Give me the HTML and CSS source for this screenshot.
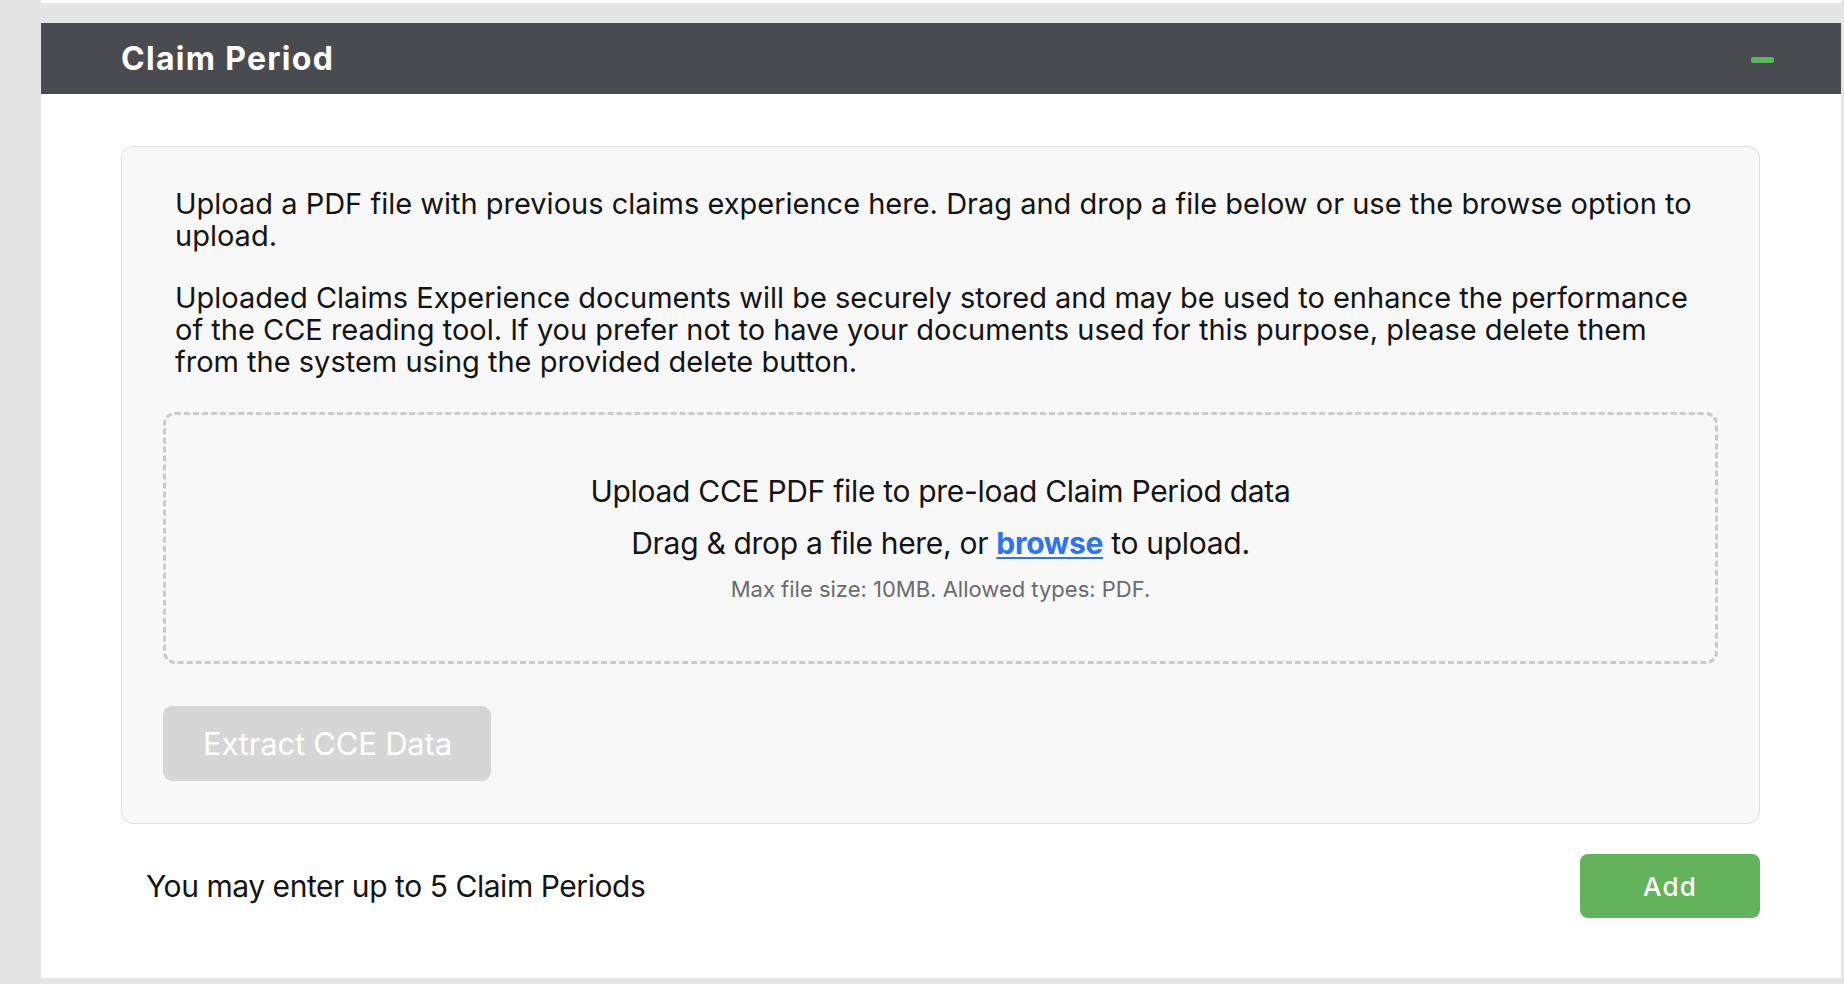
FILE: index.html
```html
<!DOCTYPE html>
<html lang="en">
<head>
<meta charset="utf-8">
<title>Claim Period</title>
<link rel="stylesheet" href="styles.css">
</head>
<body>
<div class="page">
  <div class="prev-panel"></div>
  <section class="panel">
    <header class="panel-header">
      <h2 class="panel-title">Claim Period</h2>
      <span class="collapse-icon" aria-label="Collapse"></span>
    </header>
    <div class="panel-body">
      <div class="upload-card">
        <p class="intro">Upload a PDF file with previous claims experience here. Drag and drop a file below or use the browse option to upload.</p>
        <p class="intro second">Uploaded Claims Experience documents will be securely stored and may be used to enhance the performance of the CCE reading tool. If you prefer not to have your documents used for this purpose, please delete them from the system using the provided delete button.</p>
        <div class="dropzone">
          <div class="drop-title">Upload CCE PDF file to pre-load Claim Period data</div>
          <div class="drop-line">Drag &amp; drop a file here, or <a class="browse" href="#">browse</a> to upload.</div>
          <div class="drop-hint">Max file size: 10MB. Allowed types: PDF.</div>
        </div>
        <button class="extract-btn" disabled>Extract CCE Data</button>
      </div>
      <div class="footer-row">
        <span class="limit-text">You may enter up to 5 Claim Periods</span>
        <button class="add-btn">Add</button>
      </div>
    </div>
  </section>
</div>
</body>
</html>
```

FILE: styles.css
```css
* { box-sizing: border-box; }

html, body {
  margin: 0;
  padding: 0;
}

body {
  background: #e5e5e5;
  font-family: Inter, "Noto Sans", "Liberation Sans", sans-serif;
  color: #141414;
}

.page {
  padding: 0 3px 4px 41px;
}

.prev-panel {
  height: 3px;
  background: #ffffff;
  margin-bottom: 20px;
}

.panel {
  background: #ffffff;
}

.panel-header {
  height: 71px;
  background: #4a4b50;
  display: flex;
  align-items: center;
  justify-content: space-between;
  padding: 0 67px 0 80px;
}

.panel-title {
  margin: 0;
  color: #ffffff;
  font-weight: 700;
  font-size: 32px;
  letter-spacing: 1.3px;
  line-height: 36px;
}

.collapse-icon {
  display: block;
  width: 23px;
  height: 6px;
  border-radius: 2px;
  background: #5db65a;
  margin-top: 3px;
}

.panel-body {
  padding: 52px 81px 60px 80px;
}

.upload-card {
  background: #f8f8f8;
  border: 1px solid #dedede;
  border-radius: 12px;
  padding: 41px 41px 42px 41px;
}

.intro {
  margin: 0;
  padding: 0 12px;
  font-size: 29px;
  line-height: 32px;
  letter-spacing: 0;
  color: #141414;
}

.intro.second {
  margin-top: 30px;
}

.dropzone {
  margin-top: 34px;
  border: 3px dashed #cbcbcb;
  border-radius: 12px;
  padding: 60px 20px 60px;
  text-align: center;
  display: flex;
  flex-direction: column;
  align-items: center;
}

.drop-title {
  font-size: 30px;
  line-height: 32px;
  letter-spacing: -0.3px;
}

.drop-line {
  margin-top: 20px;
  font-size: 30px;
  line-height: 32px;
  letter-spacing: -0.3px;
}

.browse {
  color: #2f73ec;
  font-weight: 700;
  text-decoration: underline;
  text-underline-offset: 3px;
  text-decoration-thickness: 2px;
}

.drop-hint {
  margin-top: 18px;
  font-size: 22px;
  line-height: 24px;
  color: #6b6b6b;
}

.extract-btn {
  margin-top: 42px;
  display: block;
  width: 328px;
  height: 75px;
  padding: 0 0 0 40px;
  text-align: left;
  border: none;
  border-radius: 9px;
  background: #d6d6d6;
  color: #ffffff;
  font-family: Inter, "Noto Sans", "Liberation Sans", sans-serif;
  font-size: 31px;
  letter-spacing: -0.2px;
}

.footer-row {
  margin-top: 30px;
  display: flex;
  align-items: center;
  justify-content: space-between;
  padding-left: 25px;
}

.limit-text {
  font-size: 30px;
  line-height: 34px;
  letter-spacing: -0.45px;
  color: #141414;
}

.add-btn {
  width: 180px;
  height: 64px;
  border: none;
  border-radius: 8px;
  background: #62b35c;
  color: #ffffff;
  font-family: Inter, "Noto Sans", "Liberation Sans", sans-serif;
  font-size: 26px;
  font-weight: 500;
  letter-spacing: 1.2px;
}
```
